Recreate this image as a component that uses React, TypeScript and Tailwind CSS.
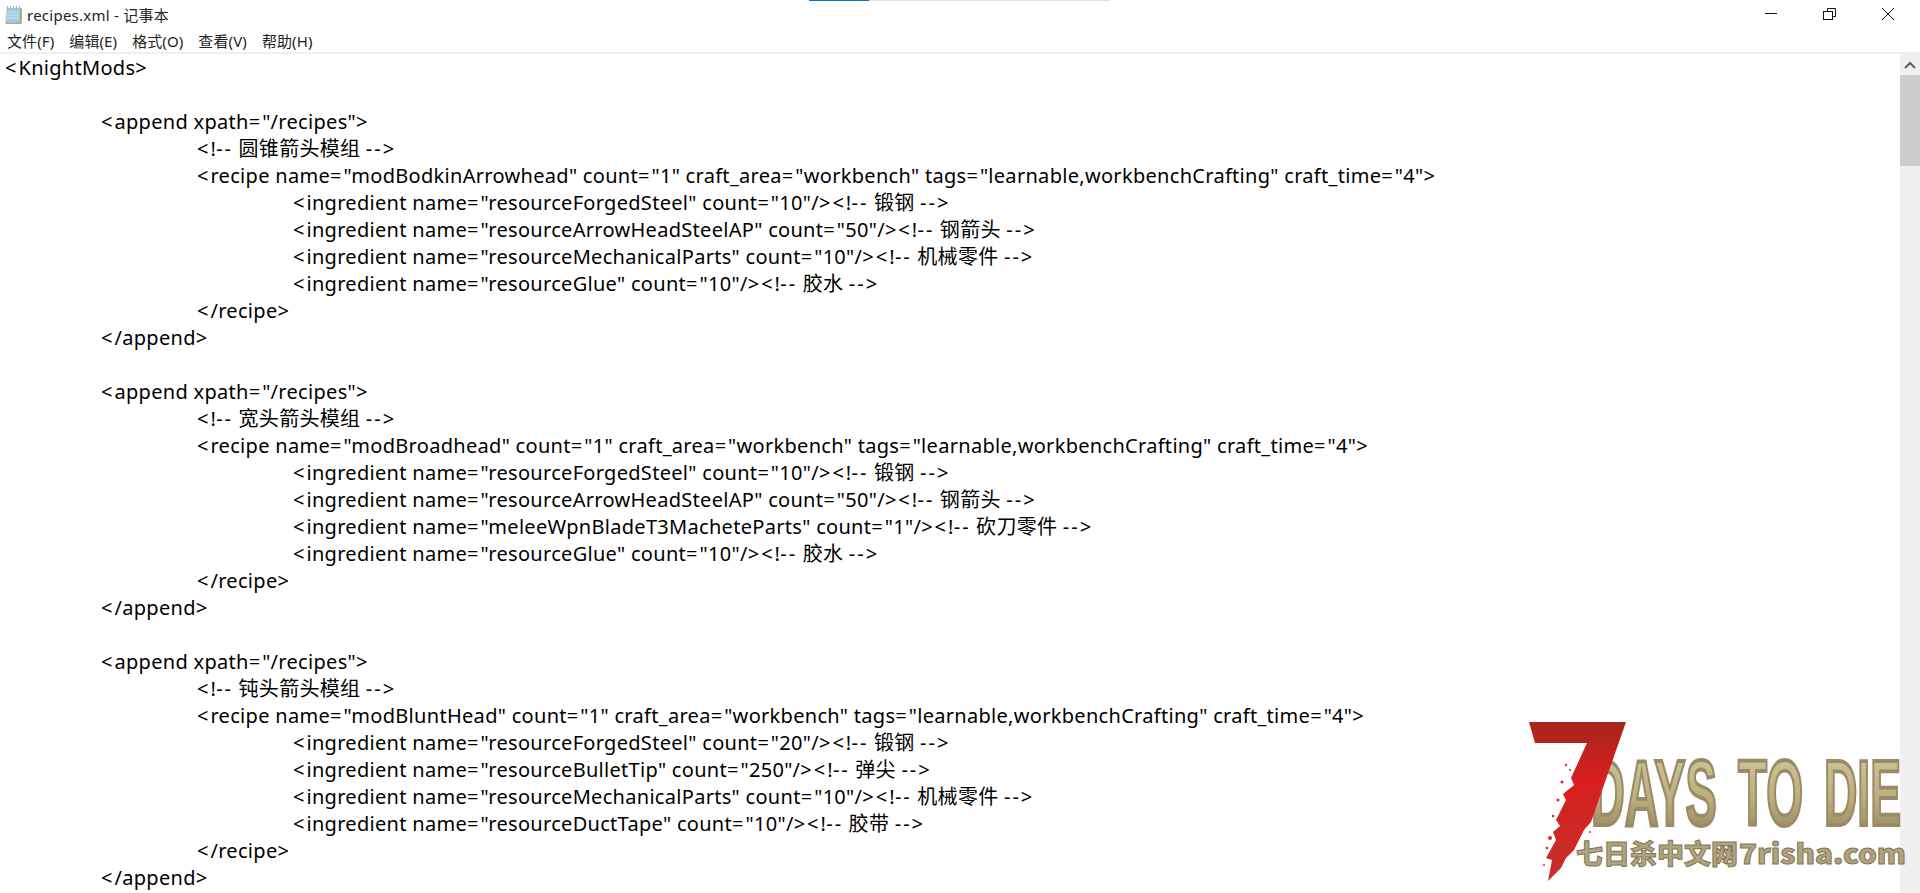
const L: [number, string][] = [
  [0, '<KnightMods>'], [0, ''],
  [1, '<append xpath="/recipes">'],
  [2, '<!-- 圆锥箭头模组 -->'],
  [2, '<recipe name="modBodkinArrowhead" count="1" craft_area="workbench" tags="learnable,workbenchCrafting" craft_time="4">'],
  [3, '<ingredient name="resourceForgedSteel" count="10"/><!-- 锻钢 -->'],
  [3, '<ingredient name="resourceArrowHeadSteelAP" count="50"/><!-- 钢箭头 -->'],
  [3, '<ingredient name="resourceMechanicalParts" count="10"/><!-- 机械零件 -->'],
  [3, '<ingredient name="resourceGlue" count="10"/><!-- 胶水 -->'],
  [2, '</recipe>'], [1, '</append>'], [0, ''],
  [1, '<append xpath="/recipes">'],
  [2, '<!-- 宽头箭头模组 -->'],
  [2, '<recipe name="modBroadhead" count="1" craft_area="workbench" tags="learnable,workbenchCrafting" craft_time="4">'],
  [3, '<ingredient name="resourceForgedSteel" count="10"/><!-- 锻钢 -->'],
  [3, '<ingredient name="resourceArrowHeadSteelAP" count="50"/><!-- 钢箭头 -->'],
  [3, '<ingredient name="meleeWpnBladeT3MacheteParts" count="1"/><!-- 砍刀零件 -->'],
  [3, '<ingredient name="resourceGlue" count="10"/><!-- 胶水 -->'],
  [2, '</recipe>'], [1, '</append>'], [0, ''],
  [1, '<append xpath="/recipes">'],
  [2, '<!-- 钝头箭头模组 -->'],
  [2, '<recipe name="modBluntHead" count="1" craft_area="workbench" tags="learnable,workbenchCrafting" craft_time="4">'],
  [3, '<ingredient name="resourceForgedSteel" count="20"/><!-- 锻钢 -->'],
  [3, '<ingredient name="resourceBulletTip" count="250"/><!-- 弹尖 -->'],
  [3, '<ingredient name="resourceMechanicalParts" count="10"/><!-- 机械零件 -->'],
  [3, '<ingredient name="resourceDuctTape" count="10"/><!-- 胶带 -->'],
  [2, '</recipe>'], [1, '</append>'],
];
const indent = ['pl-[5px]', 'pl-[101px]', 'pl-[197px]', 'pl-[293px]'];
const menus = ['文件(F)', '编辑(E)', '格式(O)', '查看(V)', '帮助(H)'];
const font = "font-['Noto_Sans','Noto_Sans_CJK_SC',sans-serif]";

function Code({ text }: { text: string }) {
  const parts = text.split(/([<>=-]+)/);
  return (
    <>
      {parts.map((p, i) =>
        i % 2 === 1 ? <span key={i} className="tracking-[2px]">{p}</span> : <span key={i}>{p}</span>
      )}
    </>
  );
}

const big = { fontFamily: "'Liberation Sans',sans-serif", fontWeight: 700, fontSize: 92, fill: 'url(#gold)', stroke: '#9a8b66', strokeWidth: 3, vectorEffect: 'non-scaling-stroke' as const };
const small = { y: 864, lengthAdjust: 'spacingAndGlyphs' as const, fontFamily: "'Noto Sans CJK SC',sans-serif", fontWeight: 900, fontSize: 27, fill: '#b0a47f', stroke: '#857657', strokeWidth: 1 };

function Logo() {
  return (
    <svg className="absolute left-[1520px] top-[715px] pointer-events-none" width="400" height="178" viewBox="1520 715 400 178">
      <defs>
        <linearGradient id="gold" x1="0" y1="0" x2="0" y2="1">
          <stop offset="0" stopColor="#d2cba2" />
          <stop offset="0.55" stopColor="#bcae80" />
          <stop offset="1" stopColor="#8f7d57" />
        </linearGradient>
        <linearGradient id="red" x1="0" y1="0" x2="0" y2="1">
          <stop offset="0" stopColor="#a5261c" />
          <stop offset="0.35" stopColor="#d81f1e" />
          <stop offset="1" stopColor="#c4302c" />
        </linearGradient>
      </defs>
      <text transform="translate(1591 825) scale(0.509 1)" {...big}>DAYS</text>
      <text transform="translate(1738 825) scale(0.516 1)" {...big}>TO</text>
      <text transform="translate(1824 825) scale(0.502 1)" {...big}>DIE</text>
      <text x="1576" textLength="162" {...small}>七日杀中文网</text>
      <text x="1739" textLength="167" {...small}>7risha.com</text>
      <polygon fill="url(#red)" points="1529,722 1626,722 1591,822 1584,830 1574,850 1566,858 1561,868 1548,881 1552,860 1546,858 1556,840 1553,832 1560,826 1556,820 1566,800 1563,794 1574,785 1571,778 1587,743 1535,743" />
      <g fill="#d92a28">
        <circle cx="1550" cy="838" r="2" /><circle cx="1558" cy="800" r="1.5" /><circle cx="1566" cy="765" r="1.2" /><circle cx="1562" cy="782" r="1.5" /><circle cx="1553" cy="816" r="1.3" /><circle cx="1544" cy="865" r="1" /><circle cx="1570" cy="770" r="1" /><circle cx="1547" cy="848" r="1.3" /><circle cx="1590" cy="832" r="1" />
      </g>
    </svg>
  );
}

export default function App() {
  return (
    <div className={`relative h-[893px] w-[1920px] overflow-hidden bg-white text-black ${font}`}>
      <div className="absolute left-[809px] top-0 h-px w-[60px] bg-[#1170b5]" />
      <div className="absolute left-[869px] top-0 h-px w-[241px] bg-[#e2e2e2]" />
      <header className="flex h-[30px] items-center pl-[3px]">
        <svg width="20" height="22" viewBox="0 0 20 22" className="mr-[4px]">
          <path d="M4 4h14l1 1v14l-1 1H2l1-1z" fill="#b4a988" />
          <path d="M4 4h13l-.5 14.500H2z" fill="#a3cee2" />
          <path d="M4 8h12M4 11h12M3.500 14h12" stroke="#c6e3ef" />
          <path d="M4.500 2v4M7.500 2v4M10.500 2v4M13.500 2v4M16.500 2v4" stroke="#a8b4b8" strokeWidth="1.200" />
        </svg>
        <span className="text-[15px] tracking-[0.25px] text-[#222]">recipes.xml - 记事本</span>
        <div className="ml-auto flex h-[30px] items-center pr-[4px]">
          <svg width="58" height="30" viewBox="0 0 58 30"><path d="M23 13.500h12" stroke="#111" strokeWidth="1" /></svg>
          <svg width="58" height="30" viewBox="0 0 58 30" fill="none" stroke="#111"><path d="M27.500 11V8.500h8v8H32.500" /><rect x="23.500" y="11.500" width="9" height="8" /></svg>
          <svg width="58" height="30" viewBox="0 0 58 30" stroke="#111" strokeWidth="1"><path d="M24 8l12 12M36 8L24 20" /></svg>
        </div>
      </header>
      <nav className="flex h-[22px] items-center gap-[15px] pl-[7px] text-[15px] tracking-[0.1px] text-[#222]">
        {menus.map((m) => <span key={m}>{m}</span>)}
      </nav>
      <div className="h-[2px] bg-[#f0f0f0]" />
      <main className="flex h-[839px]">
        <div className="min-w-0 flex-1 overflow-hidden text-[20px] leading-[27px] tracking-[0.3px]">
          {L.map(([lvl, t], i) => (
            <div key={i} className={`h-[27px] whitespace-pre ${indent[lvl]}`}><Code text={t} /></div>
          ))}
        </div>
        <aside className="flex w-[20px] flex-col bg-[#f0f0f0]">
          <div className="flex h-[21px] items-center justify-center">
            <svg width="12" height="8" viewBox="0 0 12 8" fill="none" stroke="#606060" strokeWidth="2"><path d="M1 7l5-5 5 5" /></svg>
          </div>
          <div className="h-[91px] bg-[#cdcdcd]" />
        </aside>
      </main>
      <Logo />
    </div>
  );
}
